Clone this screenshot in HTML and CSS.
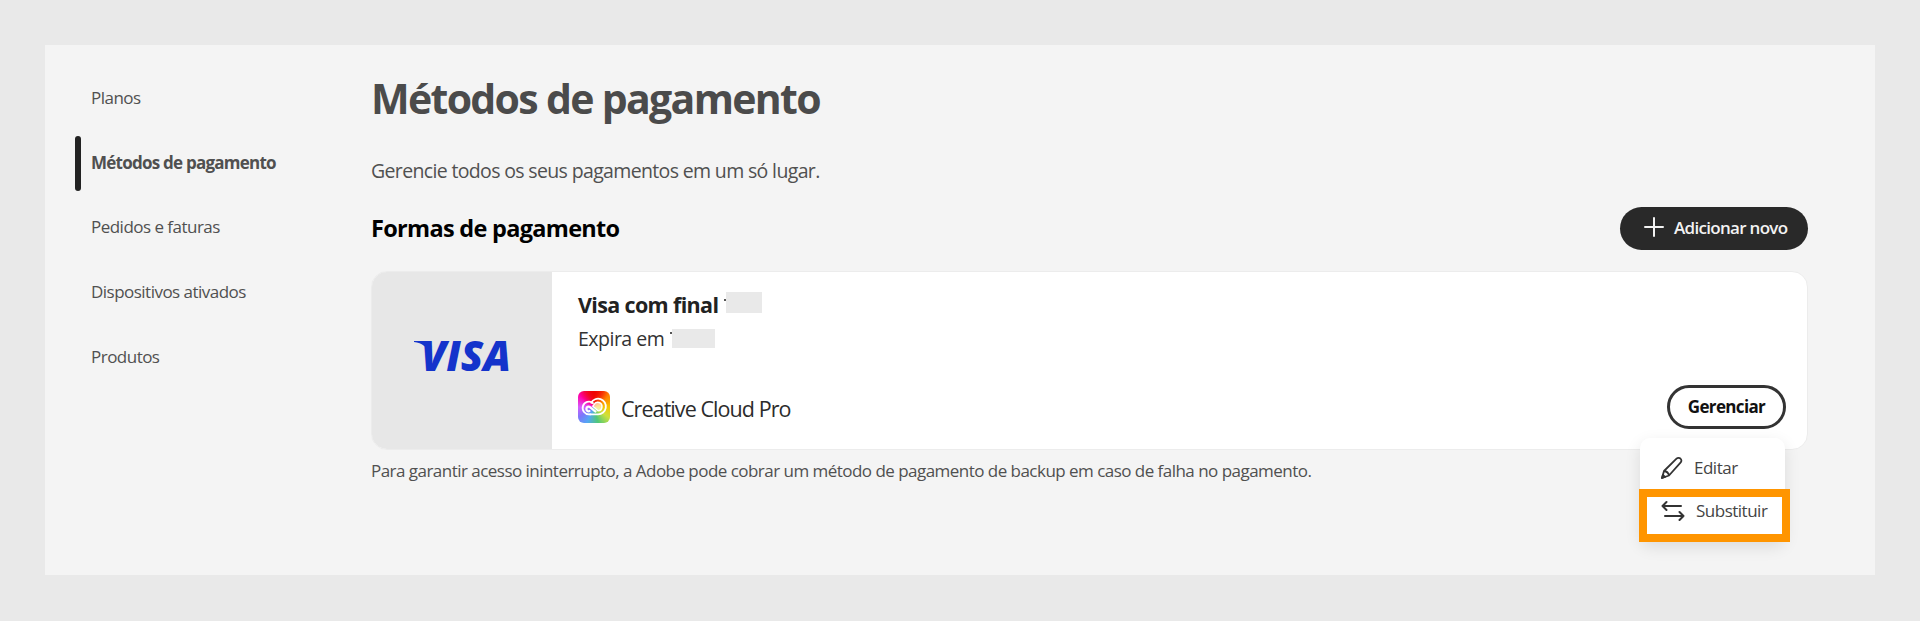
FILE: index.html
```html
<!DOCTYPE html>
<html lang="pt-BR">
    <head>
        <meta charset="UTF-8">
        <meta name="viewport" content="width=device-width, initial-scale=1.0">
        <title>Métodos de pagamento</title>
        <link rel="stylesheet" href="styles.css">
    </head>
    <body>
        <div class="panel">
            <nav class="sidebar">
                <a class="nav-item">Planos</a>
                <a class="nav-item active">Métodos de pagamento</a>
                <a class="nav-item">Pedidos e faturas</a>
                <a class="nav-item">Dispositivos ativados</a>
                <a class="nav-item">Produtos</a>
            </nav>
            <main class="content">
                <h1 class="page-title">Métodos de pagamento</h1>
                <p class="intro">Gerencie todos os seus pagamentos em um só lugar.</p>
                <div class="section-header">
                    <h2 class="section-title">Formas de pagamento</h2>
                    <button class="add-button">
                        <svg width="20" height="20" viewBox="0 0 20 20"><path d="M10 1v18M1 10h18" stroke="#f2f2f2" stroke-width="2" stroke-linecap="round"/></svg>
                        <span>Adicionar novo</span>
                    </button>
                </div>
                <div class="card">
                    <div class="brand">
                        <svg width="98" height="62" viewBox="0 -14 98 62" fill="#1434cb">
                            <path d="M1 2h15l3 16C15 8 9 4 1 3z"/>
                            <text class="brand-name" x="8" y="32" textLength="90" lengthAdjust="spacingAndGlyphs">VISA</text>
                        </svg>
                    </div>
                    <div class="details">
                        <div class="card-name"><span>Visa com final</span><i class="tick"></i><i class="mask"></i></div>
                        <div class="card-expiry"><span>Expira em</span><i class="tick"></i><i class="mask"></i></div>
                        <div class="product">
                            <span class="cc-icon">
                                <svg width="32" height="32" viewBox="0 0 32 32" fill="none" stroke="#fff" stroke-width="1.8" stroke-linecap="round" stroke-linejoin="round">
                                    <path d="M12 23.300h8a7.800 7.800 0 1 0-6.800-11.500"/>
                                    <path d="M15 12.200a6.300 6.300 0 1 0-3.500 11.100h1"/>
                                    <path d="M17.500 20.600l-5.500-4.500a2.300 2.300 0 1 0-.5 4" stroke-width="2.200"/>
                                    <path d="M14.800 15.300l5.200 4.500a4.200 4.200 0 1 0-4-6z" fill="#fff" fill-opacity=".6" stroke-width="1.500"/>
                                </svg>
                            </span>
                            <span class="product-name">Creative Cloud Pro</span>
                        </div>
                    </div>
                    <div class="manage">
                        <button class="manage-button">Gerenciar</button>
                        <div class="menu">
                            <div class="menu-item">
                                <svg width="24" height="24" viewBox="0 0 24 24" fill="none" stroke="#333" stroke-width="1.8" stroke-linejoin="round"><path d="M2 22l2-7L16.500 2.700c1.300-1.300 3-1.100 4 0 1.100 1 1.300 2.700 0 4L9 19.500zM4 15c2.500.3 4.500 2 5 4.500"/><path d="M2 22l.9-3 2.100 2z" fill="#333"/></svg>
                                <span class="menu-label">Editar</span>
                            </div>
                            <div class="menu-item highlighted">
                                <svg width="24" height="22" viewBox="0 0 24 22" fill="none" stroke="#333" stroke-width="2" stroke-linecap="round" stroke-linejoin="round"><path d="M20 6H1.500M5.500 2l-4 4 4 4M4 16h18.500M18.500 12l4 4-4 4"/></svg>
                                <span class="menu-label">Substituir</span>
                            </div>
                        </div>
                    </div>
                </div>
                <p class="footnote">Para garantir acesso ininterrupto, a Adobe pode cobrar um método de pagamento de backup em caso de falha no pagamento.</p>
            </main>
        </div>
    </body>
</html>
```
FILE: styles.css
```css
:root {
    --page: #e9e9e9;
    --panel: #f4f4f4;
    --text: #505050;
    --dark: #292929;
    --orange: #ff9500;
}

* {
    box-sizing: border-box;
}

body {
    margin: 0;
    padding: 45px;
    height: 621px;
    overflow: hidden;
    background: var(--page);
    font-family: "Open Sans", "Noto Sans", sans-serif;
    color: var(--text);
    white-space: nowrap;
}

h1, h2, p {
    margin: 0;
}

button {
    font-family: inherit;
}

.panel {
    display: flex;
    height: 530px;
    padding: 26px 67px 0 30px;
    background: var(--panel);
}

/* Left navigation */
.sidebar {
    display: flex;
    flex-direction: column;
    gap: 9.700px;
    width: 296px;
}

.nav-item {
    height: 55px;
    padding-left: 10px;
    border-left: 6px solid transparent;
    font-size: 17px;
    letter-spacing: -0.520px;
    line-height: 54px;
}

.active {
    position: relative;
    font-weight: 700;
    letter-spacing: -0.760px;
}

.active::before {
    content: "";
    position: absolute;
    left: -6px;
    top: 0;
    width: 6px;
    height: 55px;
    border-radius: 3px;
    background: #222;
}

/* Main column */
.content {
    flex: 1;
}

.page-title {
    height: 58px;
    font-size: 41px;
    letter-spacing: -1.680px;
    line-height: 55px;
    color: #4b4b4b;
}

.intro {
    height: 28px;
    margin-top: 28px;
    font-size: 19.500px;
    letter-spacing: -0.650px;
    line-height: 28px;
}

.section-header {
    display: flex;
    justify-content: space-between;
    align-items: center;
    height: 43px;
    margin-top: 22px;
}

.section-title {
    font-size: 23.500px;
    letter-spacing: -0.700px;
    line-height: 43px;
    color: #000;
}

.add-button {
    display: flex;
    align-items: center;
    gap: 10px;
    width: 188px;
    height: 43px;
    padding: 0 0 3px 24px;
    border: 0;
    border-radius: 22px;
    background: var(--dark);
    color: #f2f2f2;
    font-size: 17px;
    font-weight: 600;
    letter-spacing: -0.700px;
}

.card {
    display: flex;
    height: 179px;
    margin-top: 21px;
    border: 1px solid #ececec;
    border-radius: 16px;
    background: #fff;
}

.brand {
    display: flex;
    align-items: center;
    justify-content: center;
    width: 180px;
    padding-bottom: 9px;
    border-radius: 15px 0 0 15px;
    background: #e7e7e7;
}

.brand-name {
    font-size: 42px;
    font-weight: 800;
    font-style: italic;
}

.details {
    flex: 1;
    padding: 17px 0 0 26px;
}

.card-name, .card-expiry {
    display: flex;
    align-items: center;
    color: #222;
}

.card-name {
    height: 31px;
    font-size: 21.500px;
    font-weight: 700;
    letter-spacing: -0.650px;
}

.card-expiry {
    height: 28px;
    margin-top: 4px;
    font-size: 19.500px;
    letter-spacing: -0.500px;
    color: #333;
}

/* Hidden digits */
.tick {
    width: 2px;
    height: 2px;
    margin: 0 0 10px 6px;
    background: #555;
}

.mask {
    width: 36px;
    height: 21px;
    margin-bottom: 4px;
    background: #e9e9e9;
}

.card-expiry .mask {
    width: 43px;
    height: 19px;
    margin-bottom: 0;
}

.product {
    display: flex;
    gap: 11px;
    margin-top: 39px;
    color: #2c2c2c;
}

.cc-icon {
    width: 32px;
    height: 32px;
    border-radius: 6px;
    background:
        radial-gradient(circle at 50% 0, #f00000 0, transparent 40%),
        conic-gradient(from 0deg, #ef1010, #ff7500 45deg, #f7c500 90deg, #cde13c 125deg, #50c878 165deg, #55a6f5 205deg, #7c78fa 235deg, #d65cff 270deg, #ff00a5 310deg, #ef1010);
}

.product-name {
    font-size: 21.500px;
    letter-spacing: -0.930px;
    line-height: 35px;
}

.manage {
    position: relative;
    padding: 113px 21px 0 0;
}

.manage-button {
    display: block;
    width: 119px;
    height: 44px;
    padding: 0 0 2px;
    border: 3px solid #333;
    border-radius: 22px;
    background: #fff;
    font-size: 17px;
    font-weight: 700;
    letter-spacing: -0.650px;
    color: #111;
}

/* Dropdown opened under the button */
.menu {
    position: absolute;
    top: 166px;
    right: 22px;
    width: 145px;
    height: 104px;
    padding-top: 8px;
    border-radius: 10px;
    background: #fff;
    box-shadow: 0 5px 16px rgba(0, 0, 0, 0.100);
    font-size: 17px;
    letter-spacing: -0.500px;
    color: #444;
}

.menu-item {
    display: flex;
    align-items: center;
    gap: 10px;
    height: 43px;
    padding-left: 20px;
}

.highlighted {
    gap: 11px;
    width: 151px;
    height: 53px;
    margin-left: -1px;
    padding: 0 0 10px 14px;
    border: 8px solid var(--orange);
}

.footnote {
    margin-top: 8px;
    font-size: 17px;
    letter-spacing: -0.530px;
    line-height: 25px;
}
```
